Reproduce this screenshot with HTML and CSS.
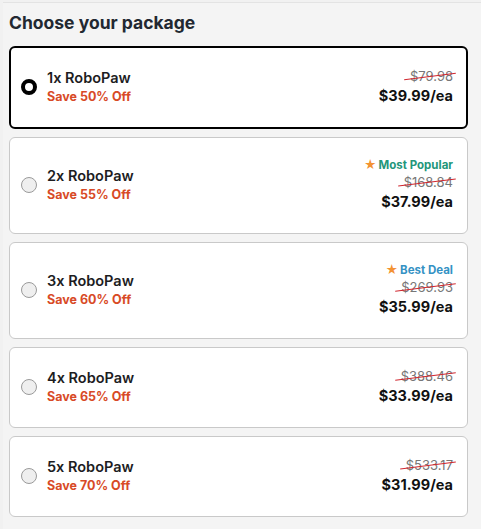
FILE: index.html
```html
<!DOCTYPE html>
<html lang="en">
<head>
<meta charset="utf-8">
<title>Choose your package</title>
<link rel="stylesheet" href="styles.css">
</head>
<body>
<main class="wrap">
  <h2 class="title">Choose your package</h2>
  <div class="list">
    <label class="card selected">
      <span class="radio"></span>
      <span class="info">
        <span class="name">1x RoboPaw</span>
        <span class="save">Save 50% Off</span>
      </span>
      <span class="price">
        <span class="old">$79.98</span>
        <span class="new">$39.99/ea</span>
      </span>
    </label>
    <label class="card">
      <span class="radio"></span>
      <span class="info">
        <span class="name">2x RoboPaw</span>
        <span class="save">Save 55% Off</span>
      </span>
      <span class="price">
        <span class="badge green"><span class="star">★</span>Most Popular</span>
        <span class="old">$168.84</span>
        <span class="new">$37.99/ea</span>
      </span>
    </label>
    <label class="card">
      <span class="radio"></span>
      <span class="info">
        <span class="name">3x RoboPaw</span>
        <span class="save">Save 60% Off</span>
      </span>
      <span class="price">
        <span class="badge blue"><span class="star">★</span>Best Deal</span>
        <span class="old">$269.93</span>
        <span class="new">$35.99/ea</span>
      </span>
    </label>
    <label class="card">
      <span class="radio"></span>
      <span class="info">
        <span class="name">4x RoboPaw</span>
        <span class="save">Save 65% Off</span>
      </span>
      <span class="price">
        <span class="old">$388.46</span>
        <span class="new">$33.99/ea</span>
      </span>
    </label>
    <label class="card">
      <span class="radio"></span>
      <span class="info">
        <span class="name">5x RoboPaw</span>
        <span class="save">Save 70% Off</span>
      </span>
      <span class="price">
        <span class="old">$533.17</span>
        <span class="new">$31.99/ea</span>
      </span>
    </label>
  </div>
</main>
</body>
</html>
```

FILE: styles.css
```css
html, body {
  margin: 0;
  padding: 0;
  background: #f1f1f1;
  font-family: "Inter", "Noto Sans", sans-serif;
  color: #1d1d1f;
}

.wrap {
  margin: 2px 0 0 3px;
  border-top: 1px solid #e3e3e3;
  background: #f4f4f4;
  padding: 8px 13px 12px 6px;
  min-height: 520px;
}

.title {
  margin: 0 0 11px 0;
  font-size: 17.5px;
  line-height: 24px;
  font-weight: 700;
  color: #222831;
}

.list {
  display: flex;
  flex-direction: column;
  gap: 8px;
}

.card {
  display: flex;
  align-items: center;
  background: #fff;
  border: 1px solid #c9c9c9;
  border-radius: 6px;
  padding: 19px 14px 21px 11px;
}

.card.selected {
  border: 2px solid #000;
  padding: 19px 13px 21px 10px;
}

.radio {
  flex: none;
  width: 16px;
  height: 16px;
  box-sizing: border-box;
  border-radius: 50%;
  border: 1px solid #9a9a9a;
  background: #efefef;
  margin-right: 10px;
}

.selected .radio {
  border: 4px solid #000;
  background: #fff;
}

.info {
  display: flex;
  flex-direction: column;
  flex: 1;
}

.name {
  font-size: 14.5px;
  line-height: 21px;
  font-weight: 600;
  color: #1d1d1f;
}

.save {
  font-size: 12.5px;
  line-height: 18px;
  font-weight: 700;
  color: #d84a26;
}

.price {
  display: flex;
  flex-direction: column;
  align-items: flex-end;
}

.badge {
  font-size: 11.5px;
  line-height: 16px;
  font-weight: 700;
  display: flex;
  align-items: center;
}

.badge.green { color: #23967a; }
.badge.blue { color: #3592c4; }

.star {
  color: #f39233;
  font-size: 12px;
  margin-right: 2px;
}

.old {
  position: relative;
  font-size: 13px;
  line-height: 18px;
  color: #777;
  font-weight: 400;
}

.old::after {
  content: "";
  position: absolute;
  left: -6px;
  right: -3px;
  top: 9px;
  height: 1px;
  background: #d0262e;
  transform: rotate(-7deg);
}

.new {
  font-size: 14.5px;
  line-height: 21px;
  font-weight: 700;
  color: #111;
}
```
